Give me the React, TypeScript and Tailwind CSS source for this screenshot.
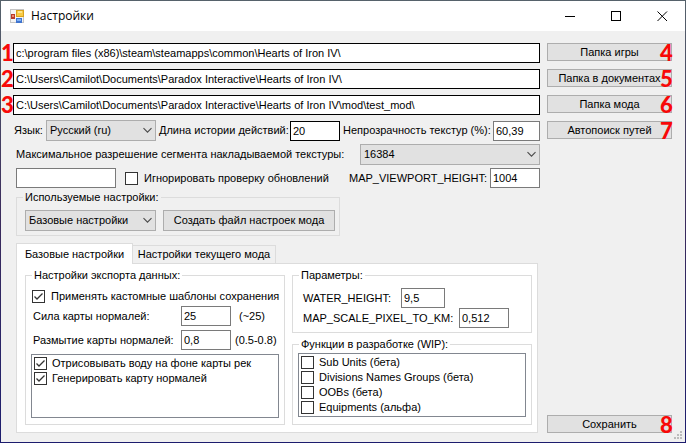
import { useId, useState } from "react";
import type { ReactNode } from "react";

const uiFont = "font-['Liberation_Sans',Arial,sans-serif]";

function Field({ value, label, id, className = "" }: { value: string; label?: string; id?: string; className?: string }) {
  return (
    <input
      id={id}
      type="text"
      aria-label={label}
      defaultValue={value}
      className={`h-5 min-w-0 rounded-none border bg-white px-[2px] outline-none ${className}`}
    />
  );
}

function Picker({ value, label, id, className = "" }: { value: string; label?: string; id?: string; className?: string }) {
  return (
    <div className={`relative h-[21px] shrink-0 ${className}`}>
      <select
        id={id}
        aria-label={label}
        defaultValue={value}
        className="block h-full w-full appearance-none rounded-none border border-[#adadad] bg-[#e1e1e1] pr-5 pl-[3px] outline-none"
      >
        <option>{value}</option>
      </select>
      <svg className="pointer-events-none absolute top-[7px] right-1 h-[7px] w-[9px]" viewBox="0 0 9 7" fill="none">
        <path d="M0.5 1.2 L4.5 5.2 L8.5 1.2" stroke="#4a4a4a" strokeWidth="1.1" />
      </svg>
    </div>
  );
}

function Check({ text, checked = false, gap = "gap-[6px]" }: { text: string; checked?: boolean; gap?: string }) {
  const id = useId();
  return (
    <div className={`flex items-center ${gap}`}>
      <span className="relative block h-[13px] w-[13px] shrink-0">
        <input
          id={id}
          type="checkbox"
          defaultChecked={checked}
          className="peer block h-[13px] w-[13px] appearance-none rounded-none border border-[#333333] bg-white"
        />
        <svg className="pointer-events-none absolute inset-0 hidden h-[13px] w-[13px] peer-checked:block" viewBox="0 0 13 13" fill="none">
          <path d="M2.5 6.5 L5 9 L10.5 3.5" stroke="#333333" strokeWidth="1.3" />
        </svg>
      </span>
      <label htmlFor={id}>{text}</label>
    </div>
  );
}

function Group({ title, frame = "", className = "", children }: { title: string; frame?: string; className?: string; children: ReactNode }) {
  return (
    <fieldset className={`min-w-0 border border-[#dcdcdc] ${frame}`}>
      <legend className="ml-[6px] px-[2px]">{title}</legend>
      <div className={className}>{children}</div>
    </fieldset>
  );
}

const digit = "font-['Lato',sans-serif] text-[22px] leading-5 font-black text-[#f80808]";

function PushButton({ text, mark, className = "" }: { text: string; mark: number; className?: string }) {
  return (
    <div className={`relative ${className}`}>
      <button className="block h-[18px] w-full border border-[#adadad] bg-[#e1e1e1]">{text}</button>
      <span className={`pointer-events-none absolute top-0 right-0 w-3 text-center ${digit}`}>{mark}</span>
    </div>
  );
}

function AppIcon() {
  return (
    <svg className="h-[15px] w-[15px]" viewBox="0 0 15 15">
      <rect x="0.5" y="0.5" width="13" height="13" fill="#f4f4f4" stroke="#c4c4c4" />
      <rect x="1" y="5" width="4" height="5" fill="#b93a2a" />
      <rect x="2" y="6" width="2" height="2" fill="#ef8a70" />
      <rect x="6" y="1" width="8" height="7" fill="#d9a21c" />
      <rect x="7" y="2" width="6" height="5" fill="#f9cb45" />
      <rect x="8" y="2" width="4" height="2" fill="#fde58b" />
      <rect x="6" y="9" width="6" height="5" fill="#3f74cf" />
      <rect x="7" y="10" width="4" height="2" fill="#7fb0f2" />
    </svg>
  );
}

function TitleBar() {
  return (
    <header className="flex h-[30px] items-center bg-white pl-[9px]">
      <AppIcon />
      <h1 className="ml-[6px] flex-1 font-['Open_Sans','Noto_Sans',sans-serif] text-[12px] leading-4">Настройки</h1>
      <button aria-label="Свернуть" className="flex h-full w-[46px] items-center justify-center">
        <svg className="h-[11px] w-[11px]" viewBox="0 0 11 11"><path d="M0 5.5 H10" stroke="#000" /></svg>
      </button>
      <button aria-label="Развернуть" className="flex h-full w-[46px] items-center justify-center">
        <svg className="h-[11px] w-[11px]" viewBox="0 0 11 11"><rect x="0.5" y="0.5" width="9" height="9" fill="none" stroke="#000" /></svg>
      </button>
      <button aria-label="Закрыть" className="flex h-full w-[46px] items-center justify-center">
        <svg className="h-[11px] w-[11px]" viewBox="0 0 11 11"><path d="M0.5 0.5 L10 10 M10 0.5 L0.5 10" stroke="#000" /></svg>
      </button>
    </header>
  );
}

const paths = [
  { name: "Папка игры", value: "c:\\program files (x86)\\steam\\steamapps\\common\\Hearts of Iron IV\\" },
  { name: "Папка в документах", value: "C:\\Users\\Camilot\\Documents\\Paradox Interactive\\Hearts of Iron IV\\" },
  { name: "Папка мода", value: "C:\\Users\\Camilot\\Documents\\Paradox Interactive\\Hearts of Iron IV\\mod\\test_mod\\" },
];

const wip = ["Sub Units (бета)", "Divisions Names Groups (бета)", "OOBs (бета)", "Equipments (альфа)"];

const tabs = ["Базовые настройки", "Настройки текущего мода"];

function BasicTab() {
  return (
    <div className="mr-[2px] flex gap-[7px] border border-[#dcdcdc] bg-white pt-[5px] pr-[5px] pb-[7px] pl-2">
      <Group title="Настройки экспорта данных:" frame="w-[260px]" className="pt-2 pr-[5px] pb-[6px] pl-[5px]">
        <div className="pl-px">
          <Check text="Применять кастомные шаблоны сохранения" checked />
        </div>
        <div className="mt-[3px] flex items-center">
          <label htmlFor="strength" className="w-[150px] pl-[2px]">Сила карты нормалей:</label>
          <Field id="strength" value="25" className="w-[50px] border-[#7a7a7a]" />
          <span className="ml-2">(~25)</span>
        </div>
        <div className="mt-1 flex items-center">
          <label htmlFor="blur" className="w-[150px] pl-[2px]">Размытие карты нормалей:</label>
          <Field id="blur" value="0,8" className="w-[50px] border-[#7a7a7a]" />
          <span className="ml-1">(0.5-0.8)</span>
        </div>
        <div className="mt-1 flex h-16 flex-col gap-[2px] border border-[#828790] pt-[2px] pl-[2px]">
          <Check text="Отрисовывать воду на фоне карты рек" checked gap="gap-[5px]" />
          <Check text="Генерировать карту нормалей" checked gap="gap-[5px]" />
        </div>
      </Group>
      <div className="flex min-w-0 flex-1 flex-col gap-[5px]">
        <Group title="Параметры:" className="pt-[6px] pb-1 pl-[10px]">
          <div className="flex items-center">
            <label htmlFor="water" className="w-[98px]">WATER_HEIGHT:</label>
            <Field id="water" value="9,5" className="w-11 border-[#7a7a7a]" />
          </div>
          <div className="flex items-center">
            <label htmlFor="scale" className="w-[156px]">MAP_SCALE_PIXEL_TO_KM:</label>
            <Field id="scale" value="0,512" className="w-[50px] border-[#7a7a7a]" />
          </div>
        </Group>
        <Group title="Функции в разработке (WIP):" className="px-[5px] pt-[2px] pb-[7px]">
          <div className="flex h-16 flex-col gap-[2px] border border-[#828790] pt-[2px] pl-[2px]">
            {wip.map((w) => (
              <Check key={w} text={w} gap="gap-[5px]" />
            ))}
          </div>
        </Group>
      </div>
    </div>
  );
}

export default function App() {
  const [tab, setTab] = useState(0);
  return (
    <div className="min-h-screen bg-linear-to-b from-[#56626b] via-[#3a2a5c] to-[#1c1c6e] p-px">
      <div className={`relative bg-[#f0f0f0] text-[11px] leading-[13px] whitespace-nowrap text-black ${uiFont}`}>
        <TitleBar />
        <main className="flex gap-[7px] pt-3 pr-[13px] pb-[9px]">
          <div className="min-w-0 flex-1">
            <div className="flex flex-col gap-[6px]">
              {paths.map((p, i) => (
                <div key={p.name} className="flex items-center">
                  <span className={`w-3 text-center ${digit}`}>{i + 1}</span>
                  <Field label={p.name} value={p.value} className="flex-1 border-black" />
                </div>
              ))}
            </div>
            <div className="mt-[5px] flex h-[21px] items-center pl-[13px]">
              <label htmlFor="lang" className="w-8">Язык:</label>
              <Picker id="lang" value="Русский (ru)" className="w-[110px]" />
              <label htmlFor="history" className="ml-[3px] w-[131px]">Длина истории действий:</label>
              <Field id="history" value="20" className="w-[50px] border-black" />
              <label htmlFor="opacity" className="ml-[3px] flex-1">Непрозрачность текстур (%):</label>
              <Field id="opacity" value="60,39" className="w-[47px] border-[#7a7a7a]" />
            </div>
            <div className="mt-[3px] flex items-center pl-[15px]">
              <label htmlFor="segment" className="flex-1">Максимальное разрешение сегмента накладываемой текстуры:</label>
              <Picker id="segment" value="16384" className="w-[180px]" />
            </div>
            <div className="mt-[3px] flex items-center pl-[15px]">
              <Field label="Значение" value="" className="mr-[9px] w-[100px] border-[#7a7a7a]" />
              <Check text="Игнорировать проверку обновлений" />
              <label htmlFor="viewport" className="ml-auto w-[141px]">MAP_VIEWPORT_HEIGHT:</label>
              <Field id="viewport" value="1004" className="w-[50px] border-[#7a7a7a]" />
            </div>
            <div className="mt-[3px] ml-[15px] flex">
              <Group title="Используемые настройки:" className="flex gap-[7px] pt-[6px] pr-1 pb-1 pl-2">
                <Picker label="Используемые настройки" value="Базовые настройки" className="w-[131px]" />
                <button className="h-[21px] w-[172px] border border-[#adadad] bg-[#e1e1e1]">Создать файл настроек мода</button>
              </Group>
            </div>
            <div className="mt-[7px] ml-[15px]">
              <div role="tablist" className="relative -mb-px flex items-end">
                {tabs.map((t, i) => (
                  <button
                    key={t}
                    role="tab"
                    aria-selected={tab === i}
                    onClick={() => setTab(i)}
                    className={
                      tab === i
                        ? "h-[21px] w-[117px] border border-b-0 border-[#dcdcdc] bg-white"
                        : "h-[19px] w-[143px] border border-l-0 border-[#dcdcdc] bg-[#f0f0f0]"
                    }
                  >
                    {t}
                  </button>
                ))}
              </div>
              <BasicTab />
            </div>
          </div>
          <aside className="flex w-[125px] flex-col gap-2">
            {paths.map((p, i) => (
              <PushButton key={p.name} text={p.name} mark={i + 4} />
            ))}
            <PushButton text="Автопоиск путей" mark={7} />
            <PushButton text="Сохранить" mark={8} className="mt-auto" />
          </aside>
        </main>
        <svg className="absolute right-[2px] bottom-[2px] h-[9px] w-[9px]" viewBox="0 0 9 9" fill="#bcbcbc">
          <path d="M6 0h2v2h-2z M3 3h2v2h-2z M6 3h2v2h-2z M0 6h2v2h-2z M3 6h2v2h-2z M6 6h2v2h-2z" />
        </svg>
      </div>
    </div>
  );
}
